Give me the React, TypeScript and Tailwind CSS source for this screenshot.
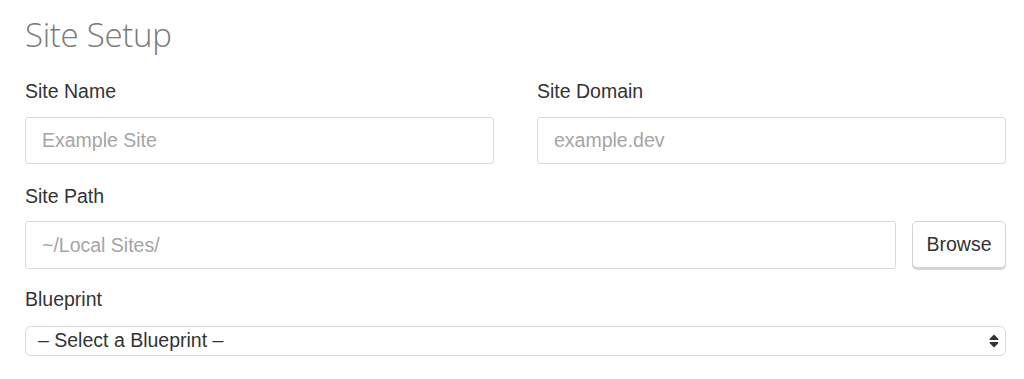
import { FaSort } from 'react-icons/fa';

const font = { fontFamily: '"Liberation Sans", Arial, sans-serif' };

export default function App() {
  return (
    <div className="min-h-[379px] bg-white pl-[25px] pr-[18px] pt-[15px]" style={font}>
      <h1 className="text-[33px] leading-[40px] text-[#7a7a7a] tracking-[-0.3px]" style={{ fontFamily: '"Open Sans", "Liberation Sans", sans-serif', fontWeight: 300 }}>
        Site Setup
      </h1>

      <div className="mt-[25px] grid grid-cols-2 gap-x-[43px]">
        <div>
          <label className="block text-[19.5px] leading-[22px] text-[#333]">Site Name</label>
          <input
            type="text"
            placeholder="Example Site"
            className="mt-[15px] block h-[47px] w-full rounded-[3px] border border-[#d9d9d9] px-[16px] text-[19.5px] text-[#333] placeholder:text-[#a5a5a5] focus:outline-none"
          />
        </div>
        <div>
          <label className="block text-[19.5px] leading-[22px] text-[#333]">Site Domain</label>
          <input
            type="text"
            placeholder="example.dev"
            className="mt-[15px] block h-[47px] w-full rounded-[3px] border border-[#d9d9d9] px-[16px] text-[19.5px] text-[#333] placeholder:text-[#a5a5a5] focus:outline-none"
          />
        </div>
      </div>

      <label className="mt-[21px] block text-[19.5px] leading-[22px] text-[#333]">Site Path</label>
      <div className="mt-[14px] flex items-start gap-[16px]">
        <input
          type="text"
          placeholder="~/Local Sites/"
          className="block h-[48px] flex-1 rounded-[3px] border border-[#d9d9d9] px-[16px] text-[19.5px] text-[#333] placeholder:text-[#a5a5a5] focus:outline-none"
        />
        <button className="h-[47px] w-[94px] rounded-[5px] border border-[#d4d4d4] bg-white text-[19.5px] text-[#333] shadow-[0_2px_0_#d6d6d6]">
          Browse
        </button>
      </div>

      <label className="mt-[19px] block text-[19.5px] leading-[22px] text-[#333]">Blueprint</label>
      <div className="relative mt-[16px]">
        <div className="flex h-[30px] items-center rounded-[6px] border border-[#d9d9d9] pl-[12px] text-[19.5px] text-[#333]">
          – Select a Blueprint –
        </div>
        <FaSort className="absolute right-[7px] top-[7px] h-[16px] w-[10px] text-[#333]" />
      </div>
    </div>
  );
}
